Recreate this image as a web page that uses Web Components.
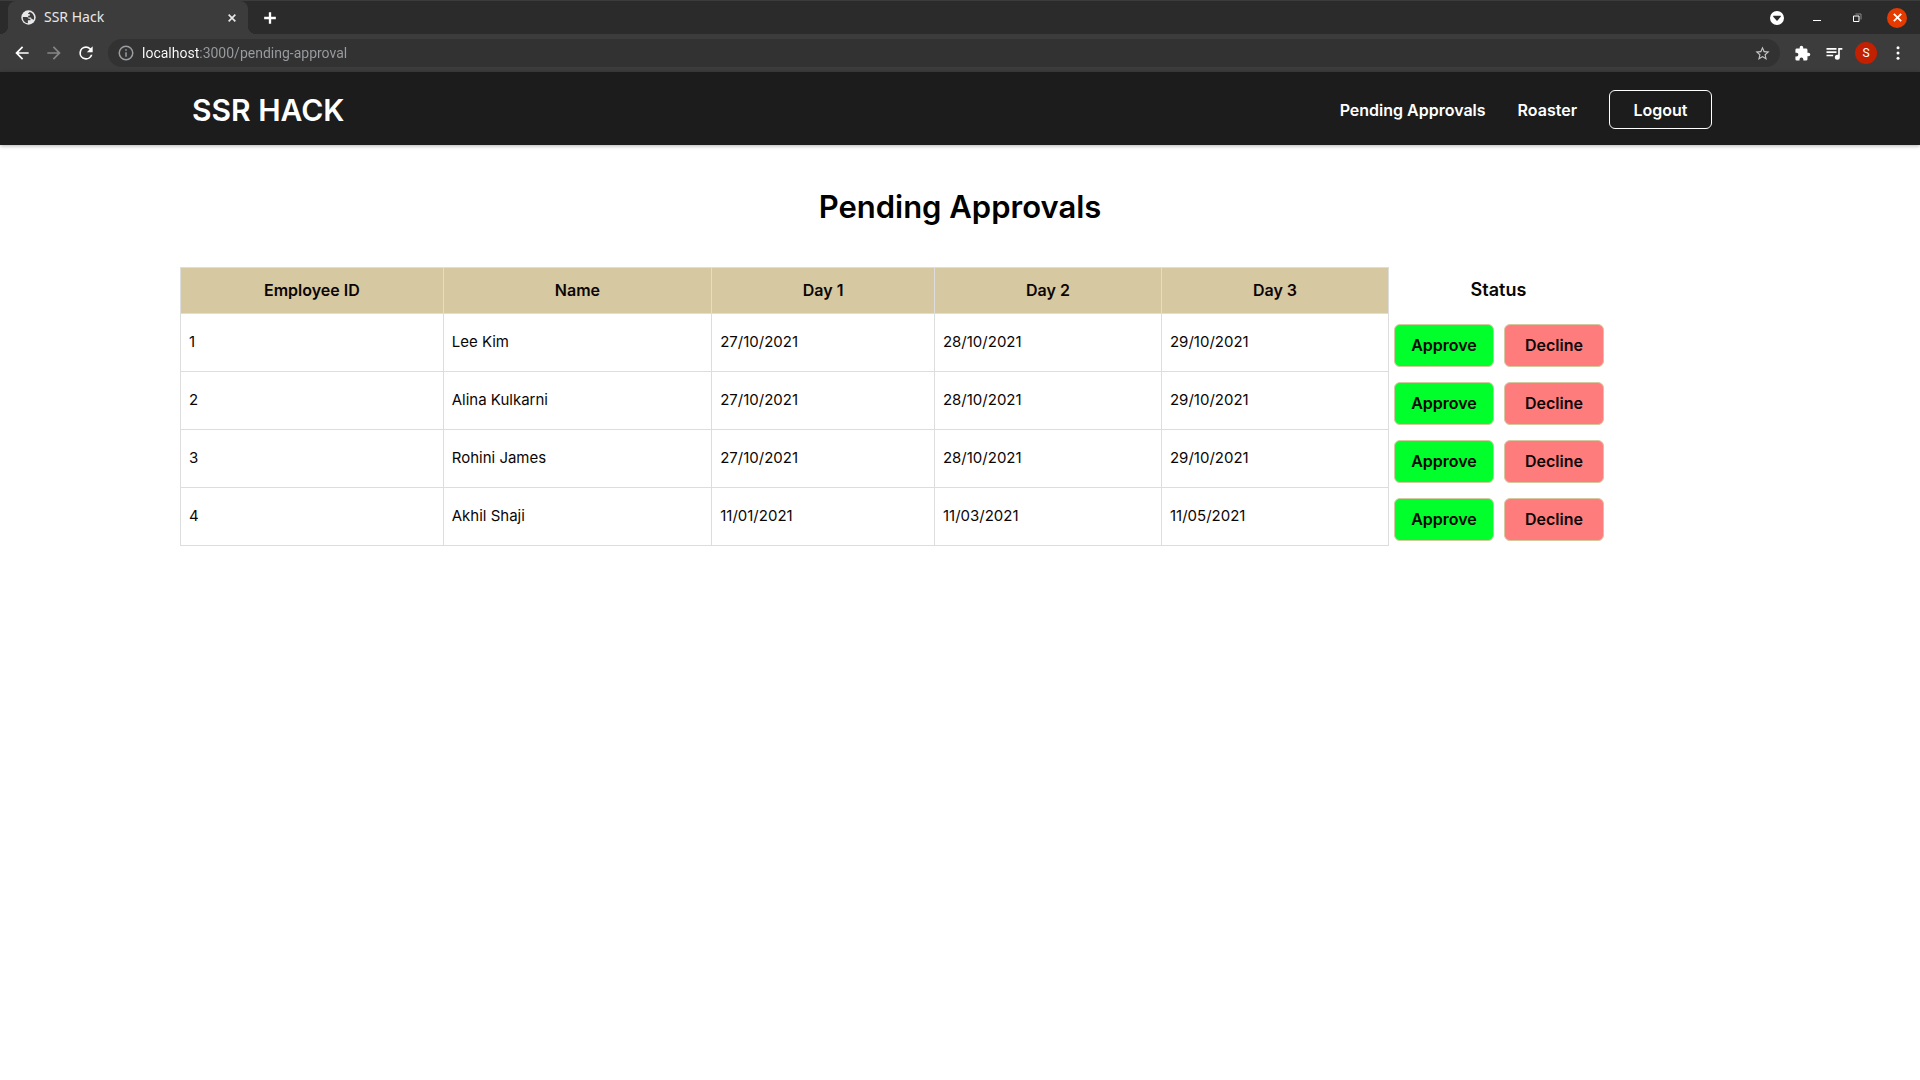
<!DOCTYPE html>
<html lang="en">
<head>
<meta charset="utf-8">
<meta name="viewport" content="width=device-width, initial-scale=1">
<title>SSR Hack</title>
<style>
    body {
        margin: 0;
        background: #fff;
        color: #0b0606;
        font-family: Inter, "Liberation Sans", sans-serif;
        font-size: 16px;
    }
    main {
        max-width: 1560px;
        margin: 0 auto;
    }
    h1 {
        margin: 0;
        padding: 41px 0 39px;
        text-align: center;
        font-size: 31px;
        line-height: 42px;
        font-weight: 600;
        color: #000;
    }
</style>
</head>
<body>
<browser-chrome page-title="SSR Hack" url="localhost:3000/pending-approval"></browser-chrome>
<nav-bar>
    <span slot="brand">SSR HACK</span>
    <nav-link href="#pending-approval">Pending Approvals</nav-link>
    <nav-link href="#roaster">Roaster</nav-link>
    <action-button variant="outline">Logout</action-button>
</nav-bar>
<main>
    <h1>Pending Approvals</h1>
    <approval-table></approval-table>
</main>

<script>
const ICONS = {
    back: '<path d="M20 11H7.83l5.59-5.59L12 4l-8 8 8 8 1.41-1.41L7.83 13H20v-2z"/>',
    forward: '<path d="M12 4l-1.41 1.41L16.17 11H4v2h12.17l-5.58 5.59L12 20l8-8z"/>',
    reload: '<path d="M17.65 6.35A7.96 7.96 0 0 0 12 4a8 8 0 1 0 7.73 10h-2.08A6 6 0 1 1 12 6c1.66 0 3.14.69 4.22 1.78L13 11h7V4l-2.35 2.35z"/>',
    info: '<path d="M11 7h2v2h-2zm0 4h2v6h-2zm1-9a10 10 0 1 0 0 20 10 10 0 0 0 0-20zm0 18a8 8 0 1 1 0-16 8 8 0 0 1 0 16z"/>',
    star: '<path d="M22 9.24l-7.19-.62L12 2 9.19 8.63 2 9.24l5.46 4.73L5.82 21 12 17.27 18.18 21l-1.63-7.03L22 9.24zM12 15.4l-3.76 2.27 1-4.28-3.32-2.88 4.38-.38L12 6.1l1.71 4.04 4.38.38-3.32 2.88 1 4.28L12 15.4z"/>',
    puzzle: '<path d="M20.500 11H19V7a2 2 0 0 0-2-2h-4V3.500a2.500 2.500 0 0 0-5 0V5H4a2 2 0 0 0-2 2v3.800h1.500a2.700 2.700 0 0 1 0 5.400H2V20a2 2 0 0 0 2 2h3.800v-1.500a2.700 2.700 0 0 1 5.400 0V22H17a2 2 0 0 0 2-2v-4h1.500a2.500 2.500 0 0 0 0-5z"/>',
    playlist: '<path d="M15 6H3v2h12V6zm0 4H3v2h12v-2zM3 16h8v-2H3v2zM17 6v8.18c-.31-.11-.65-.18-1-.18a3 3 0 1 0 3 3V8h3V6h-5z"/>',
    menu: '<circle cx="12" cy="5" r="2"/><circle cx="12" cy="12" r="2"/><circle cx="12" cy="19" r="2"/>',
    globe: '<circle cx="12" cy="12" r="11.500"/><path fill="#3c3c3c" d="M3 11h5.500c2 0 3.500 1 3.500 3h3v2.500h-4V21C6 20.500 2.500 16.500 3 11zM14 3c4 1 7 4.500 7 9 0 1.500-.3 3-1 4-.6-1-1.500-1.500-3-1.500L16 12h-4.500V9H14V6.500h-2.500V5z"/>',
    close: '<path d="M4 4l16 16M20 4L4 20" fill="none" stroke="currentColor" stroke-width="4"/>',
    plus: '<path d="M12 2v20M2 12h20" fill="none" stroke="currentColor" stroke-width="4"/>',
    account: '<path fill-rule="evenodd" d="M12 0a12 12 0 1 0 0 24 12 12 0 0 0 0-24zM5.500 8h13v2L12 17 5.500 10z"/>',
    minimize: '<path d="M4 16h16v2H4z"/>',
    restore: '<path d="M5 8h11v11H5z" fill="none" stroke="currentColor" stroke-width="2"/><path d="M9 4h11v11" fill="none" stroke="#8a8a8a" stroke-width="2"/>'
};

/**
 * ui-icon
 * Inline SVG icon, sized by the "size" attribute.
 */
class UiIcon extends HTMLElement {
    constructor() {
        super();
        this.attachShadow({ mode: 'open' });
    }

    connectedCallback() {
        const size = this.getAttribute('size') || 20;
        this.shadowRoot.innerHTML = `
            <style>
                :host { display: inline-flex; flex: none; }
                svg { display: block; fill: currentColor; }
            </style>
            <svg width="${size}" height="${size}" viewBox="0 0 24 24" aria-hidden="true">${ICONS[this.getAttribute('name')]}</svg>
        `;
    }
}

/**
 * browser-chrome
 * Tab strip and address bar.
 */
class BrowserChrome extends HTMLElement {
    constructor() {
        super();
        this.attachShadow({ mode: 'open' });
    }

    connectedCallback() {
        this.shadowRoot.innerHTML = `
            <style>
                :host {
                    display: block;
                    font-family: "Noto Sans", "Open Sans", sans-serif;
                    font-size: 14px;
                    color: #fff;
                    background: #3c3c3c;
                }
                button {
                    display: flex;
                    align-items: center;
                    justify-content: center;
                    flex: none;
                    width: 32px;
                    height: 28px;
                    padding: 0;
                    border: 0;
                    background: none;
                    color: inherit;
                    font: inherit;
                }
                .tabs {
                    display: flex;
                    height: 33px;
                    padding: 0 3px 0 8px;
                    border-top: 1px solid #3c3c3c;
                    background: #2b2b2b;
                }
                .tab {
                    position: relative;
                    display: flex;
                    align-items: center;
                    gap: 8px;
                    box-sizing: border-box;
                    width: 240px;
                    padding: 0 0 0 13px;
                    border-radius: 8px 8px 0 0;
                    background: #3c3c3c;
                    color: #e8e8e8;
                }
                .tab::before,
                .tab::after {
                    content: "";
                    position: absolute;
                    bottom: 0;
                    width: 8px;
                    height: 8px;
                }
                .tab::before {
                    left: -8px;
                    background: radial-gradient(circle at 0 0, #2b2b2b 8px, #3c3c3c 8px);
                }
                .tab::after {
                    right: -8px;
                    background: radial-gradient(circle at 100% 0, #2b2b2b 8px, #3c3c3c 8px);
                }
                .title {
                    flex: 1;
                    padding-bottom: 2px;
                }
                .new-tab { width: 44px; height: 33px; }
                .window {
                    display: flex;
                    align-items: center;
                    margin-left: auto;
                }
                .window button { width: 40px; }
                .close {
                    display: flex;
                    align-items: center;
                    justify-content: center;
                    width: 20px;
                    height: 20px;
                    border-radius: 50%;
                    background: #e53b00;
                }
                .toolbar {
                    display: flex;
                    align-items: center;
                    height: 38px;
                    padding: 0 6px;
                }
                .dim { color: #868686; }
                .address {
                    display: flex;
                    align-items: center;
                    flex: 1;
                    height: 28px;
                    margin: 0 6px;
                    padding-left: 9px;
                    gap: 7px;
                    border-radius: 14px;
                    background: #323232;
                    color: #9a9da1;
                }
                .address label { display: flex; }
                .address ui-icon { color: #9a9da1; }
                .address button { width: 36px; color: #c4c4c4; }
                .address button ui-icon { color: inherit; }
                /* the host name is lighter than the rest of the address */
                input {
                    flex: 1;
                    min-width: 0;
                    padding: 0;
                    border: 0;
                    outline: 0;
                    font-family: Roboto, sans-serif;
                    font-size: 14px;
                    color: #9a9da1;
                    background: linear-gradient(90deg, #fff 58px, #9a9da1 58px);
                    -webkit-background-clip: text;
                    background-clip: text;
                    -webkit-text-fill-color: transparent;
                }
                .avatar {
                    display: flex;
                    align-items: center;
                    justify-content: center;
                    width: 22px;
                    height: 22px;
                    border-radius: 50%;
                    background: #c22000;
                    font-family: Roboto, sans-serif;
                    font-size: 12px;
                }
            </style>
            <div class="tabs">
                <div class="tab">
                    <ui-icon name="globe" size="15"></ui-icon>
                    <span class="title">${this.getAttribute('page-title')}</span>
                    <button aria-label="Close tab"><ui-icon name="close" size="10"></ui-icon></button>
                </div>
                <button class="new-tab" aria-label="New tab"><ui-icon name="plus" size="14"></ui-icon></button>
                <div class="window">
                    <button aria-label="Account"><ui-icon name="account" size="14"></ui-icon></button>
                    <button aria-label="Minimize"><ui-icon name="minimize" size="12"></ui-icon></button>
                    <button aria-label="Restore"><ui-icon name="restore" size="12"></ui-icon></button>
                    <button aria-label="Close window"><span class="close"><ui-icon name="close" size="11"></ui-icon></span></button>
                </div>
            </div>
            <div class="toolbar">
                <button aria-label="Back"><ui-icon name="back"></ui-icon></button>
                <button class="dim" aria-label="Forward"><ui-icon name="forward"></ui-icon></button>
                <button aria-label="Reload"><ui-icon name="reload"></ui-icon></button>
                <div class="address">
                    <label for="url" aria-label="Address"><ui-icon name="info" size="18"></ui-icon></label>
                    <input id="url" type="text" value="${this.getAttribute('url')}">
                    <button aria-label="Bookmark"><ui-icon name="star" size="17"></ui-icon></button>
                </div>
                <button aria-label="Extensions"><ui-icon name="puzzle" size="17"></ui-icon></button>
                <button aria-label="Media"><ui-icon name="playlist"></ui-icon></button>
                <button aria-label="Profile"><span class="avatar">S</span></button>
                <button aria-label="Menu"><ui-icon name="menu" size="18"></ui-icon></button>
            </div>
        `;
    }
}

/**
 * nav-bar
 * Site header with a brand slot and a default slot for links.
 */
class NavBar extends HTMLElement {
    constructor() {
        super();
        this.attachShadow({ mode: 'open' });
        this.shadowRoot.innerHTML = `
            <style>
                :host {
                    display: block;
                    background: #1c1c1c;
                    color: #fff;
                    box-shadow: 0 1px 4px rgba(0, 0, 0, 0.3);
                }
                header {
                    display: flex;
                    align-items: center;
                    justify-content: space-between;
                    box-sizing: border-box;
                    max-width: 1560px;
                    height: 73px;
                    margin: 0 auto;
                    padding: 2px 28px 0 12px;
                }
                .brand {
                    font-size: 30px;
                    line-height: 42px;
                    font-weight: 600;
                }
                nav {
                    display: flex;
                    align-items: center;
                    gap: 32px;
                }
            </style>
            <header>
                <div class="brand"><slot name="brand"></slot></div>
                <nav><slot></slot></nav>
            </header>
        `;
    }
}

class NavLink extends HTMLElement {
    constructor() {
        super();
        this.attachShadow({ mode: 'open' });
    }

    connectedCallback() {
        this.shadowRoot.innerHTML = `
            <style>
                :host { display: block; }
                a {
                    color: inherit;
                    font-weight: 600;
                    text-decoration: none;
                }
            </style>
            <a href="${this.getAttribute('href')}"><slot></slot></a>
        `;
    }
}

/**
 * action-button
 * Variants: approve, decline, outline.
 */
class ActionButton extends HTMLElement {
    constructor() {
        super();
        this.attachShadow({ mode: 'open' });
        this.shadowRoot.innerHTML = `
            <style>
                :host { display: block; }
                button {
                    display: block;
                    box-sizing: border-box;
                    width: 100px;
                    height: 43px;
                    padding: 0;
                    border: 1px solid #d6c8a0;
                    border-radius: 6px;
                    background: #00ff2b;
                    color: #0b0606;
                    font: inherit;
                    font-weight: 600;
                    cursor: pointer;
                }
                :host([variant="decline"]) button { background: #ff7c7c; }
                :host([variant="outline"]) button {
                    width: 103px;
                    height: 39px;
                    border-color: #fff;
                    background: none;
                    color: #fff;
                }
            </style>
            <button type="button"><slot></slot></button>
        `;
    }
}

/**
 * approval-table
 * Leave requests with an approve/decline pair for every row.
 */
class ApprovalTable extends HTMLElement {
    constructor() {
        super();
        this.attachShadow({ mode: 'open' });
        this._rows = [
            ['1', 'Lee Kim', '27/10/2021', '28/10/2021', '29/10/2021'],
            ['2', 'Alina Kulkarni', '27/10/2021', '28/10/2021', '29/10/2021'],
            ['3', 'Rohini James', '27/10/2021', '28/10/2021', '29/10/2021'],
            ['4', 'Akhil Shaji', '11/01/2021', '11/03/2021', '11/05/2021']
        ];
    }

    connectedCallback() {
        this.render();
    }

    renderRow(row) {
        return `
            <tr>
                ${row.map(value => `<td>${value}</td>`).join('')}
                <td class="status">
                    <div class="actions">
                        <action-button variant="approve">Approve</action-button>
                        <action-button variant="decline">Decline</action-button>
                    </div>
                </td>
            </tr>
        `;
    }

    render() {
        const columns = ['Employee ID', 'Name', 'Day 1', 'Day 2', 'Day 3'];
        const widths = [18.4, 18.8, 15.6, 15.9, 15.9, 15.4];
        this.shadowRoot.innerHTML = `
            <style>
                :host { display: block; }
                table {
                    width: 91.6%;
                    table-layout: fixed;
                    border-collapse: collapse;
                    line-height: 20px;
                }
                th, td {
                    box-sizing: border-box;
                    padding: 0 8px 2px;
                    border: 1px solid #ddd;
                    text-align: left;
                }
                td { font-size: 15px; }
                th {
                    height: 46px;
                    background: #d6c8a0;
                    font-weight: 600;
                    text-align: center;
                }
                .status {
                    border: 0;
                    background: none;
                }
                th.status { font-size: 18px; }
                td.status {
                    padding: 10px 0 5px 5px;
                    font-size: 16px;
                }
                .actions {
                    display: flex;
                    gap: 10px;
                }
            </style>
            <table>
                <colgroup>${widths.map(width => `<col style="width: ${width}%">`).join('')}</colgroup>
                <thead>
                    <tr>
                        ${columns.map(name => `<th>${name}</th>`).join('')}
                        <th class="status">Status</th>
                    </tr>
                </thead>
                <tbody>${this._rows.map(row => this.renderRow(row)).join('')}</tbody>
            </table>
        `;
    }
}

customElements.define('ui-icon', UiIcon);
customElements.define('browser-chrome', BrowserChrome);
customElements.define('nav-bar', NavBar);
customElements.define('nav-link', NavLink);
customElements.define('action-button', ActionButton);
customElements.define('approval-table', ApprovalTable);
</script>
</body>
</html>
